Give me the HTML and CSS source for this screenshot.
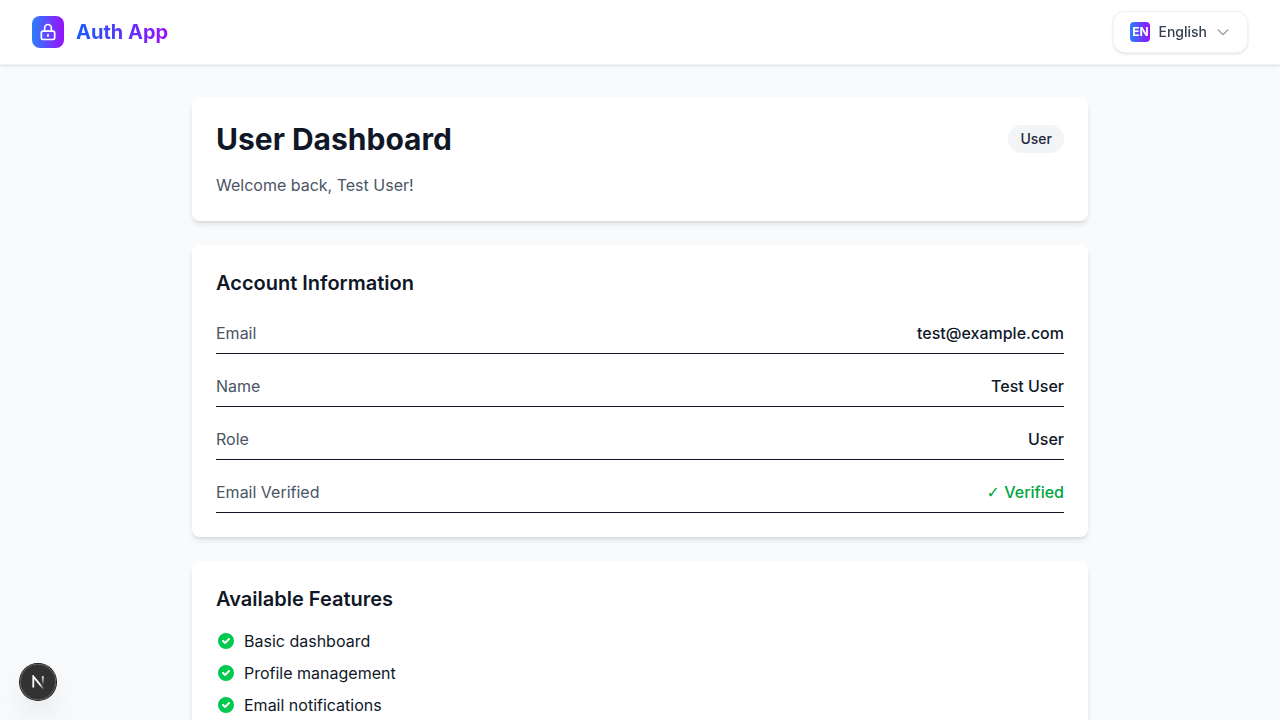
FILE: index.html
```
<!DOCTYPE html>
<html lang="en">
<head>
<meta charset="utf-8">
<meta name="viewport" content="width=device-width, initial-scale=1">
<title>User Dashboard</title>
<link rel="stylesheet" href="styles.css">
</head>
<body>
<header class="site-header">
  <a class="brand" href="#">
    <span class="brand-mark">
      <svg width="20" height="20" viewBox="0 0 24 24" fill="none" stroke="currentColor" stroke-width="2" stroke-linecap="round" stroke-linejoin="round" aria-hidden="true"><path d="M12 15v2m-6 4h12a2 2 0 002-2v-6a2 2 0 00-2-2H6a2 2 0 00-2 2v6a2 2 0 002 2zm10-10V7a4 4 0 00-8 0v4h8z"/></svg>
    </span>
    <span class="brand-name">Auth App</span>
  </a>
  <button class="language" type="button" aria-haspopup="listbox">
    <span class="language-code">EN</span>
    <span>English</span>
    <svg class="chevron" width="16" height="16" viewBox="0 0 24 24" fill="none" stroke="currentColor" stroke-width="2" stroke-linecap="round" stroke-linejoin="round" aria-hidden="true"><path d="M19 9l-7 7-7-7"/></svg>
  </button>
</header>

<main class="content">
  <section class="card">
    <div class="card-head">
      <h1>User Dashboard</h1>
      <span class="badge">User</span>
    </div>
    <p class="muted">Welcome back, Test User!</p>
  </section>

  <section class="card">
    <h2>Account Information</h2>
    <dl class="info">
      <div class="info-row"><dt>Email</dt><dd>test@example.com</dd></div>
      <div class="info-row"><dt>Name</dt><dd>Test User</dd></div>
      <div class="info-row"><dt>Role</dt><dd>User</dd></div>
      <div class="info-row"><dt>Email Verified</dt><dd class="verified"><span class="tick">✓</span> Verified</dd></div>
    </dl>
  </section>

  <section class="card">
    <h2>Available Features</h2>
    <ul class="features">
      <li><svg class="check" width="20" height="20" viewBox="0 0 20 20" fill="currentColor" aria-hidden="true"><path fill-rule="evenodd" d="M10 18a8 8 0 100-16 8 8 0 000 16zm3.707-9.293a1 1 0 00-1.414-1.414L9 10.586 7.707 9.293a1 1 0 00-1.414 1.414l2 2a1 1 0 001.414 0l4-4z" clip-rule="evenodd"/></svg>Basic dashboard</li>
      <li><svg class="check" width="20" height="20" viewBox="0 0 20 20" fill="currentColor" aria-hidden="true"><path fill-rule="evenodd" d="M10 18a8 8 0 100-16 8 8 0 000 16zm3.707-9.293a1 1 0 00-1.414-1.414L9 10.586 7.707 9.293a1 1 0 00-1.414 1.414l2 2a1 1 0 001.414 0l4-4z" clip-rule="evenodd"/></svg>Profile management</li>
      <li><svg class="check" width="20" height="20" viewBox="0 0 20 20" fill="currentColor" aria-hidden="true"><path fill-rule="evenodd" d="M10 18a8 8 0 100-16 8 8 0 000 16zm3.707-9.293a1 1 0 00-1.414-1.414L9 10.586 7.707 9.293a1 1 0 00-1.414 1.414l2 2a1 1 0 001.414 0l4-4z" clip-rule="evenodd"/></svg>Email notifications</li>
    </ul>
  </section>
</main>

<button class="dev-tools" type="button" aria-label="Open developer tools">
  <svg width="14" height="14" viewBox="0 0 14 14" fill="none" aria-hidden="true">
    <defs>
      <linearGradient id="diagonal" gradientUnits="userSpaceOnUse" x1="9" y1="9" x2="13" y2="14"><stop stop-color="#fff"/><stop offset="1" stop-color="#fff" stop-opacity="0"/></linearGradient>
      <linearGradient id="stem" gradientUnits="userSpaceOnUse" x1="12" y1="1" x2="12" y2="10"><stop stop-color="#fff"/><stop offset="1" stop-color="#fff" stop-opacity="0"/></linearGradient>
    </defs>
    <path d="M13 14.5 2.3 1.4V12.6" stroke="url(#diagonal)" stroke-width="1.8"/>
    <path d="M11.8 1.2V12.4" stroke="url(#stem)" stroke-width="1.8"/>
  </svg>
</button>
</body>
</html>
```
FILE: styles.css
```
* {
  box-sizing: border-box;
  margin: 0;
  padding: 0;
}

body {
  min-height: 100vh;
  background: #f9fafb;
  color: #101828;
  font-family: Inter, "Liberation Sans", sans-serif;
  font-size: 16px;
  line-height: 24px;
}

.site-header {
  position: sticky;
  top: 0;
  z-index: 10;
  display: flex;
  align-items: center;
  justify-content: space-between;
  min-height: 65px;
  padding: 0 32px;
  background: rgba(255, 255, 255, 0.9);
  border-bottom: 1px solid rgba(229, 231, 235, 0.5);
  box-shadow: 0 1px 3px rgba(0, 0, 0, 0.1), 0 1px 2px -1px rgba(0, 0, 0, 0.1);
  backdrop-filter: blur(12px);
}

.brand {
  display: flex;
  align-items: center;
  gap: 12px;
  text-decoration: none;
}

.brand-mark {
  display: flex;
  align-items: center;
  justify-content: center;
  width: 32px;
  height: 32px;
  border-radius: 8px;
  background: linear-gradient(to right, #2b7fff, #9810fa);
  color: #fff;
}

.brand-name {
  background: linear-gradient(to right, #155dfc, #9810fa);
  background-clip: text;
  color: transparent;
  font-size: 20px;
  font-weight: 700;
  line-height: 28px;
}

.language {
  display: flex;
  align-items: center;
  gap: 8px;
  padding: 10px 16px;
  border: 1px solid rgba(229, 231, 235, 0.5);
  border-radius: 12px;
  background: #fff;
  box-shadow: 0 1px 3px rgba(0, 0, 0, 0.1), 0 1px 2px -1px rgba(0, 0, 0, 0.1);
  color: #364153;
  font: 500 14px/20px Inter, "Liberation Sans", sans-serif;
  cursor: pointer;
}

.language-code {
  display: flex;
  align-items: center;
  justify-content: center;
  width: 20px;
  height: 20px;
  border-radius: 4px;
  background: linear-gradient(to right, #2b7fff, #9810fa);
  color: #fff;
  font-size: 12px;
  font-weight: 700;
}

.chevron {
  color: #99a1af;
}

.content {
  display: flex;
  flex-direction: column;
  gap: 24px;
  max-width: 960px;
  margin: 0 auto;
  padding: 32px;
}

.card {
  padding: 24px;
  border-radius: 8px;
  background: #fff;
  box-shadow: 0 4px 6px -1px rgba(0, 0, 0, 0.1), 0 2px 4px -2px rgba(0, 0, 0, 0.1);
}

.card-head {
  display: flex;
  align-items: center;
  justify-content: space-between;
  margin-bottom: 16px;
}

h1 {
  font-size: 30px;
  font-weight: 700;
  line-height: 36px;
}

h2 {
  margin-bottom: 16px;
  font-size: 20px;
  font-weight: 600;
  line-height: 28px;
}

.badge {
  padding: 4px 12px;
  border-radius: 14px;
  background: #f3f4f6;
  color: #1e2939;
  font-size: 14px;
  font-weight: 500;
  line-height: 20px;
}

.muted {
  color: #4a5565;
}

.info {
  display: flex;
  flex-direction: column;
  gap: 12px;
}

.info-row {
  display: flex;
  justify-content: space-between;
  padding: 8px 0;
  border-bottom: 1px solid #101828;
}

.info-row dt {
  color: #4a5565;
}

.info-row dd {
  font-weight: 500;
}

.info-row .verified {
  color: #00a63e;
}

.tick {
  font-family: "DejaVu Sans", sans-serif;
  line-height: 1;
}

.features {
  display: flex;
  flex-direction: column;
  gap: 8px;
  list-style: none;
}

.features li {
  display: flex;
  align-items: center;
  gap: 8px;
}

.check {
  color: #00c950;
}

.dev-tools {
  position: fixed;
  bottom: 20px;
  left: 20px;
  display: flex;
  align-items: center;
  justify-content: center;
  width: 36px;
  height: 36px;
  border: 0;
  border-radius: 50%;
  background: rgba(0, 0, 0, 0.8);
  box-shadow: 0 0 0 1px #171717, inset 0 0 0 1px rgba(255, 255, 255, 0.14), 0 16px 32px -8px rgba(0, 0, 0, 0.24);
  cursor: pointer;
}
```
